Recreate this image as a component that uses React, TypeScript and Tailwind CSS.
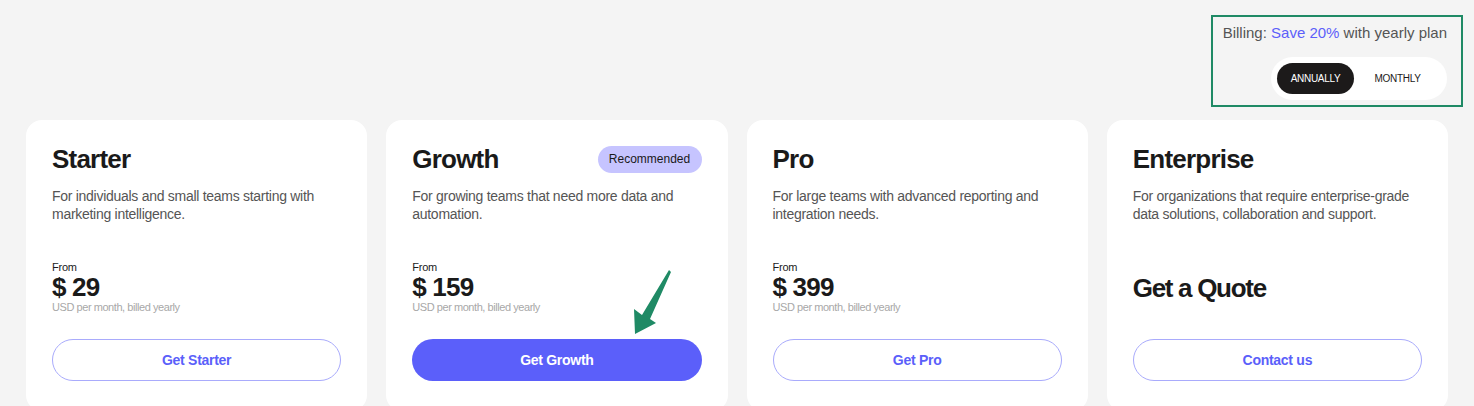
import React from 'react'

const plans = [
    { name: 'Starter', desc: 'For individuals and small teams starting with marketing intelligence.', price: '$ 29', cta: 'Get Starter' },
    { name: 'Growth', desc: 'For growing teams that need more data and automation.', price: '$ 159', cta: 'Get Growth', recommended: true },
    { name: 'Pro', desc: 'For large teams with advanced reporting and integration needs.', price: '$ 399', cta: 'Get Pro' },
    { name: 'Enterprise', desc: 'For organizations that require enterprise-grade data solutions, collaboration and support.', price: null, cta: 'Contact us' },
]

export default function App() {
    return (
        <div className="min-h-[406px] bg-[#f4f4f4] text-[#1a1a1a] overflow-hidden" style={{ fontFamily: '"Liberation Sans", Arial, sans-serif' }}>

            {/* Billing toggle */}
            <div className="flex justify-end pt-[15px] pr-[11px]">
                <div className="w-[252px] h-[92px] border-2 border-[#1f8a65] flex flex-col items-end pt-[6px] pr-[14px]">
                    <p className="text-[15px] leading-[20px] text-[#555555] whitespace-nowrap">
                        Billing: <span className="text-[#5c5ffa]">Save 20%</span> with yearly plan
                    </p>
                    <div className="mt-[14px] bg-white rounded-full p-[6px] flex items-center">
                        <button className="w-[77px] h-[31px] rounded-full bg-[#1c1a1a] text-white text-[10px] tracking-[-0.03em]">ANNUALLY</button>
                        <button className="w-[87px] h-[31px] rounded-full text-[#1c1a1a] text-[10px] tracking-[-0.03em]">MONTHLY</button>
                    </div>
                </div>
            </div>

            {/* Plans */}
            <div className="grid grid-cols-4 gap-[19px] px-[26px] mt-[13px]">
                {plans.map(p => (
                    <div key={p.name} className="relative bg-white rounded-2xl px-[26px] pt-[24px] pb-[30px]">
                        <div className="flex items-center justify-between">
                            <h2 className="text-[26px] leading-[30px] font-bold tracking-[-0.03em]">{p.name}</h2>
                            {p.recommended && (
                                <span className="h-[27px] w-[104px] rounded-full bg-[#c6c4ff] text-[12px] text-[#1a1a1a] flex items-center justify-center">Recommended</span>
                            )}
                        </div>
                        <p className="mt-[13px] h-[36px] text-[14px] leading-[18px] text-[#555555] tracking-[-0.02em]">{p.desc}</p>

                        <div className="mt-[38px] h-[53px] flex flex-col justify-center">
                            {p.price ? (
                                <>
                                    <span className="text-[11px] leading-[13px] tracking-[-0.02em]">From</span>
                                    <span className="text-[26px] leading-[26px] font-bold tracking-[-0.03em]">{p.price}</span>
                                    <span className="text-[11px] leading-[14px] text-[#a8a8a8] tracking-[-0.04em]">USD per month, billed yearly</span>
                                </>
                            ) : (
                                <span className="text-[26px] leading-[30px] font-bold tracking-[-0.05em]">Get a Quote</span>
                            )}
                        </div>

                        <button className={p.recommended
                            ? "mt-[25px] w-full h-[42px] rounded-full bg-[#5b5ffa] text-white text-[14px] font-bold tracking-[-0.02em]"
                            : "mt-[25px] w-full h-[42px] rounded-full border border-[#a9abfc] text-[#5b5ffa] text-[14px] font-bold tracking-[-0.02em]"}>
                            {p.cta}
                        </button>

                        {p.recommended && (
                            <svg className="absolute left-[240px] top-[145px] w-[50px] h-[75px]" viewBox="0 0 50 75">
                                <polygon points="9,69 8,44 16,50 43,5 45,7 24,54 30,58" fill="#1f8a65" />
                            </svg>
                        )}
                    </div>
                ))}
            </div>
        </div>
    )
}
